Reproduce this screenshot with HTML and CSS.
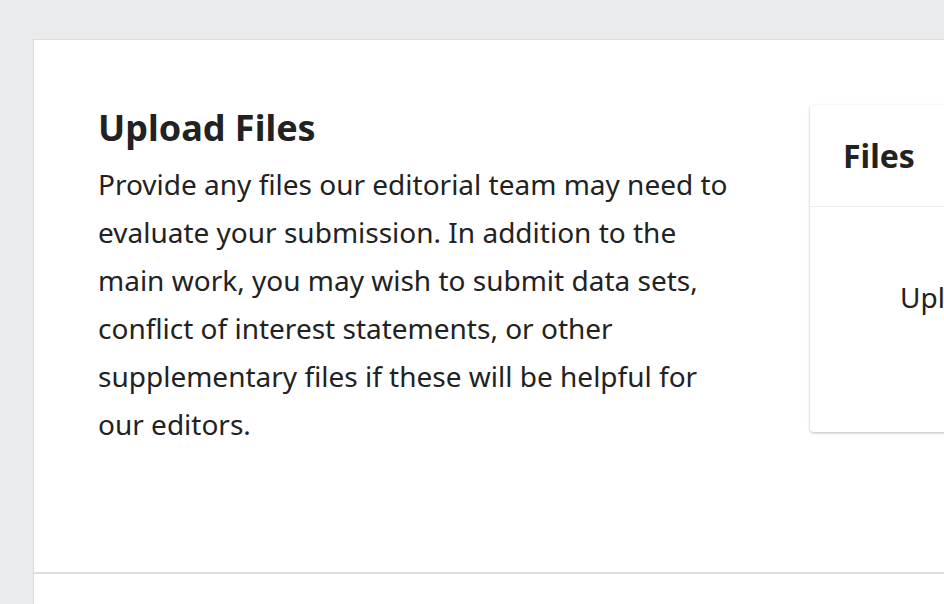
FILE: index.html
```html
<!DOCTYPE html>
<html>
<head>
<meta charset="utf-8">
<link rel="stylesheet" href="styles.css">
</head>
<body>
<div class="page">
  <section class="card">
    <div class="intro">
      <h1 class="title">Upload Files</h1>
      <p class="desc">Provide any files our editorial team may need to evaluate your submission. In addition to the main work, you may wish to submit data sets, conflict of interest statements, or other supplementary files if these will be helpful for our editors.</p>
    </div>
    <div class="panel">
      <div class="panel-head"><h2 class="panel-title">Files</h2></div>
      <div class="panel-body"><p class="panel-empty">Upload any files the editorial team will need to evaluate your submission.</p></div>
    </div>
  </section>
  <section class="card card-next"></section>
</div>
</body>
</html>
```
FILE: styles.css
```css
html, body { margin: 0; padding: 0; }
body {
  background: #eaebed;
  font-family: "Noto Sans", "Open Sans", sans-serif;
  color: #222;
  width: 944px;
  height: 604px;
  overflow: hidden;
}
.page {
  padding: 39px 0 0 33px;
}
.card {
  background: #fff;
  border-left: 1px solid #ddd;
  border-top: 1px solid #ddd;
  display: flex;
  align-items: flex-start;
  padding: 64px 0 0 64px;
  height: 533px;
  box-sizing: border-box;
  width: 1100px;
}
.card-next {
  border-top: 2px solid #ddd;
  height: 60px;
  padding: 0;
}
.intro {
  width: 640px;
  flex: none;
}
.title {
  margin: 0 0 8px;
  font-size: 36px;
  font-weight: 700;
  line-height: 48px;
}
.desc {
  margin: 0;
  font-size: 28px;
  line-height: 48px;
}
.panel {
  margin-left: 72px;
  margin-top: 1px;
  flex: none;
  width: 600px;
  height: 327px;
  background: #fff;
  border-radius: 4px;
  box-shadow: 0 1px 3px rgba(0,0,0,0.28);
}
.panel-head {
  height: 101px;
  border-bottom: 1px solid #eee;
  display: flex;
  align-items: center;
  padding-left: 33px;
}
.panel-title {
  margin: 0;
  font-size: 32px;
  font-weight: 700;
}
.panel-body {
  padding: 66px 0 0 90px;
}
.panel-empty {
  margin: 0;
  font-size: 28px;
  line-height: 48px;
  white-space: nowrap;
}
```
